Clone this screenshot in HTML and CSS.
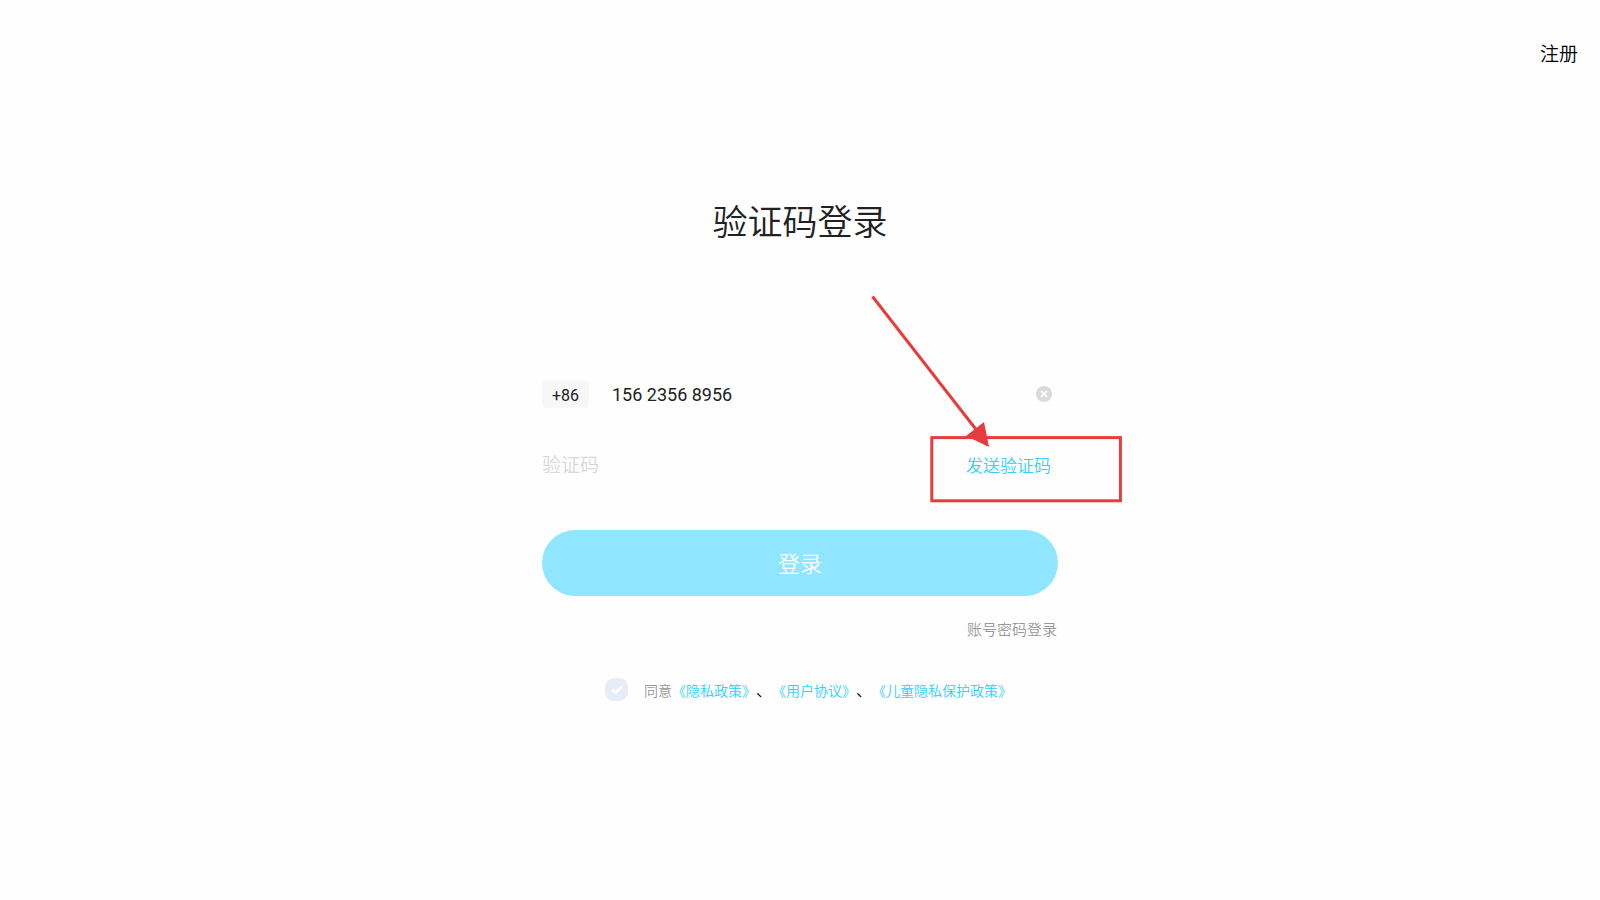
FILE: index.html
```html
<!DOCTYPE html>
<html lang="zh-CN">
<head>
<meta charset="utf-8">
<meta name="viewport" content="width=device-width, initial-scale=1">
<title>验证码登录</title>
<link rel="stylesheet" href="styles.css">
</head>
<body>
<header class="topbar"><a class="register" href="#">注册</a></header>
<main class="login">
  <h1 class="title">验证码登录</h1>
  <form class="form">
    <div class="row phone-row">
      <button class="area" type="button">+86</button>
      <input class="field" type="tel" aria-label="手机号" value="156 2356 8956">
      <button class="clear" type="button" aria-label="清除">
        <svg width="16" height="16" viewBox="0 0 16 16"><circle cx="8" cy="8" r="8" fill="#dadada"/><path d="M5 5l6 6M11 5l-6 6" stroke="#fff" stroke-width="1.7" fill="none"/></svg>
      </button>
    </div>
    <div class="row code-row">
      <input class="field" type="text" aria-label="验证码" placeholder="验证码">
      <button class="send" type="button">发送验证码</button>
      <svg class="callout" width="256" height="212" viewBox="0 0 256 212" aria-hidden="true">
        <rect x="61.8" y="143.6" width="188.6" height="63.2" fill="none" stroke="#e43d3d" stroke-width="3"/>
        <path d="M2.5 2.5L108 138" stroke="#e43d3d" stroke-width="3"/>
        <path d="M119 153L114 128L96 142Z" fill="#e43d3d"/>
      </svg>
    </div>
    <button class="submit" type="submit">登录</button>
    <a class="switch" href="#">账号密码登录</a>
    <div class="agreement">
      <input class="check" id="agree" type="checkbox">
      <svg class="tick" width="23" height="23" viewBox="0 0 23 23" aria-hidden="true"><path d="M7 11.5l3.5 3.2L17 8.5" fill="none" stroke="#fff" stroke-width="2.6"/></svg>
      <p class="terms"><label class="consent" for="agree">同意</label><a href="#">《隐私政策》</a>、<a href="#">《用户协议》</a>、<a href="#">《儿童隐私保护政策》</a></p>
    </div>
  </form>
</main>
</body>
</html>
```

FILE: styles.css
```css
* { box-sizing: border-box; }
body {
  margin: 0;
  background: #fefefe;
  color: #000;
  font-family: Roboto, "Noto Sans CJK SC", sans-serif;
  font-size: 16px;
  font-weight: 350;
  text-spacing-trim: space-all;
}
a { text-decoration: none; }
button, input { font-family: inherit; font-weight: inherit; border: 0; padding: 0; margin: 0; background: none; }
button { cursor: pointer; }
.topbar { display: flex; justify-content: flex-end; padding: 40px 22px 0; }
.register { color: #000; font-size: 19px; line-height: 30px; }
.login { display: flex; flex-direction: column; align-items: center; padding-top: 128px; }
.title { margin: 0; color: #222; font-size: 35px; font-weight: 350; line-height: 52px; }
.form { display: flex; flex-direction: column; width: 100%; max-width: 516px; margin-top: 120px; }
.row { display: flex; align-items: center; }
.phone-row { height: 48px; padding-right: 6px; font-weight: 400; }
.area { width: 47px; height: 28px; margin-right: 23px; padding-top: 2px; border-radius: 5px; background: #f7f7f7; color: #222; font-size: 16px; }
.field { flex: 1; min-width: 0; height: 32px; color: #222; font-size: 19px; outline: 0; }
.phone-row .field { font-size: 18px; }
.field::placeholder { color: #d8d8d8; opacity: 1; }
.clear { display: flex; }
.code-row { position: relative; height: 48px; margin-top: 23px; padding-right: 7px; }
.send { padding-top: 2px; color: #33cfff; font-size: 17px; line-height: 26px; }
.callout { position: absolute; right: -68px; top: -147px; pointer-events: none; }
.submit { height: 66px; margin-top: 41px; padding-bottom: 2px; border-radius: 33px; background: #91e6ff; color: #fff; font-size: 22px; }
.switch { align-self: flex-end; margin-top: 23px; padding-right: 1px; color: #999; font-size: 15px; line-height: 22px; }
.agreement { position: relative; display: flex; align-items: center; gap: 16px; margin-top: 35px; padding-left: 63px; }
.check { appearance: none; flex: none; width: 23px; height: 23px; border-radius: 9px; background: #e6ecf8; }
.tick { position: absolute; left: 63px; pointer-events: none; }
.terms { margin: 0; padding-top: 3px; line-height: 24px; white-space: nowrap; }
.consent, .terms a { font-size: 14px; }
.consent { color: #999; }
.terms a { color: #33cfff; }
```
